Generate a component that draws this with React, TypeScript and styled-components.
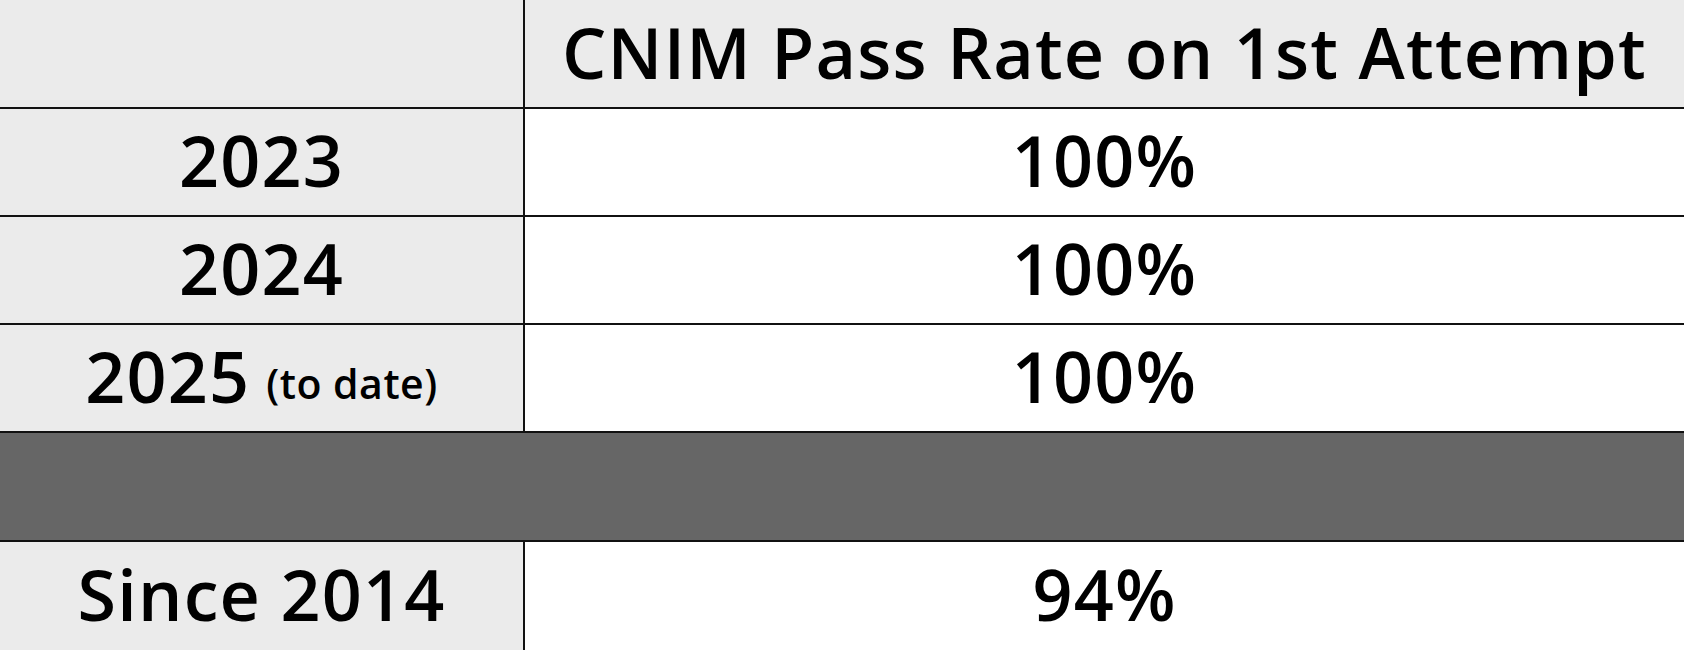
import React from 'react';
import styled, { createGlobalStyle } from 'styled-components';

const GlobalStyle = createGlobalStyle`
  html, body {
    margin: 0;
    padding: 0;
    background: #ffffff;
    overflow: hidden;
  }
`;

const Grid = styled.div`
  display: grid;
  grid-template-columns: 523px 1fr;
  grid-template-rows: 107px 106px 106px 106px 107px 108px;
  gap: 2px;
  width: 1684px;
  height: 650px;
  background: #111111;
  font-family: 'Open Sans', 'Liberation Sans', sans-serif;
  font-weight: 600;
  color: #000000;
`;

const Cell = styled.div<{ $shade?: boolean }>`
  display: flex;
  align-items: center;
  justify-content: center;
  padding-bottom: 4px;
  background: ${(p) => (p.$shade ? '#ebebeb' : '#ffffff')};
  font-size: 70px;
  letter-spacing: 1.2px;
  white-space: nowrap;
`;

const Divider = styled.div`
  grid-column: 1 / span 2;
  background: #666666;
`;

const Note = styled.span`
  font-size: 41px;
  letter-spacing: 0.5px;
  margin-left: 16px;
  padding-top: 14px;
`;

type Row = {
  year: string;
  note?: string;
  rate: string;
};

const recent: Row[] = [
  { year: '2023', rate: '100%' },
  { year: '2024', rate: '100%' },
  { year: '2025', note: '(to date)', rate: '100%' },
];

export default function App() {
  return (
    <>
      <GlobalStyle />
      <Grid>
        <Cell $shade />
        <Cell $shade>CNIM Pass Rate on 1st Attempt</Cell>
        {recent.map((row) => (
          <React.Fragment key={row.year}>
            <Cell $shade>
              {row.year}
              {row.note && <Note>{row.note}</Note>}
            </Cell>
            <Cell>{row.rate}</Cell>
          </React.Fragment>
        ))}
        <Divider />
        <Cell $shade>Since 2014</Cell>
        <Cell>94%</Cell>
      </Grid>
    </>
  );
}
